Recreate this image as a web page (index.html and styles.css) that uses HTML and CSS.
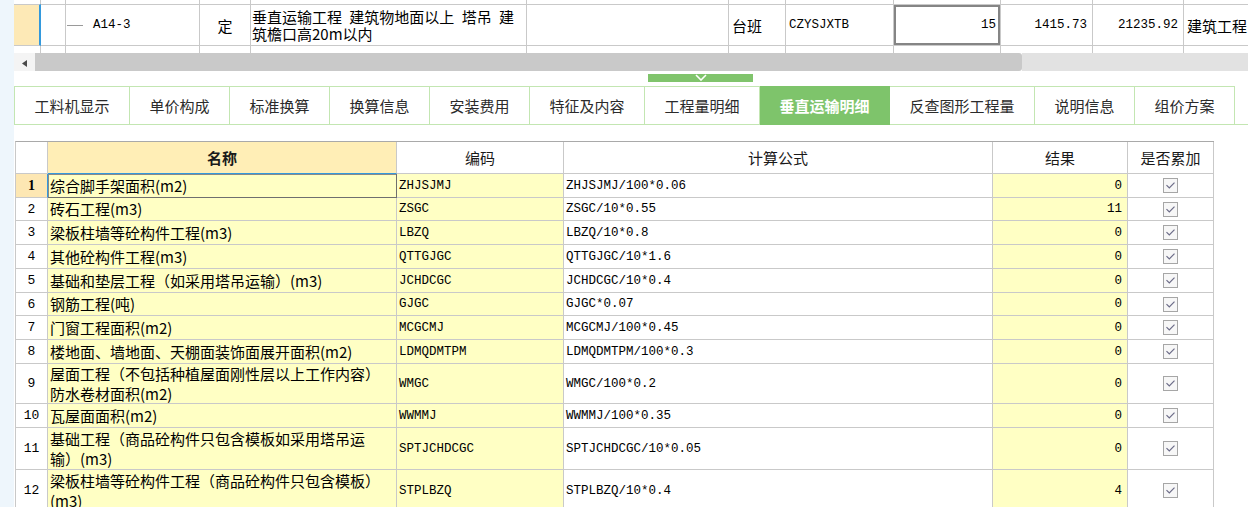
FILE: index.html
```html
<!DOCTYPE html>
<html lang="zh-CN">
<head>
<meta charset="utf-8">
<title>垂直运输明细</title>
<link rel="stylesheet" href="styles.css">
</head>
<body>
<div class="app">
  <div class="side"></div>
  <div class="main">
    <div class="topgrid">
      <div class="trow tr-a">
        <div class="tc"></div><div class="tc"></div><div class="tc"></div><div class="tc"></div><div class="tc"></div><div class="tc"></div><div class="tc"></div><div class="tc"></div><div class="tc"></div><div class="tc"></div><div class="tc"></div><div class="tc"></div>
      </div>
      <div class="trow tr-b">
        <div class="tc sel"></div>
        <div class="tc"></div>
        <div class="tc code"><span class="tree"></span><span class="mono">A14-3</span></div>
        <div class="tc center">定</div>
        <div class="tc desc"><span class="dl">垂直运输工程 建筑物地面以上 塔吊 建</span><span class="dl">筑檐口高20m以内</span></div>
        <div class="tc"></div>
        <div class="tc">台班</div>
        <div class="tc mono">CZYSJXTB</div>
        <div class="tc mono right edit">15</div>
        <div class="tc mono right">1415.73</div>
        <div class="tc mono right">21235.92</div>
        <div class="tc">建筑工程</div>
      </div>
      <div class="trow tr-c">
        <div class="tc"></div><div class="tc"></div><div class="tc"></div><div class="tc"></div><div class="tc"></div><div class="tc"></div><div class="tc"></div><div class="tc"></div><div class="tc"></div><div class="tc"></div><div class="tc"></div><div class="tc"></div>
      </div>
    </div>

    <div class="hscroll">
      <div class="sarrow"><svg width="5" height="7" viewBox="0 0 5 7"><path d="M5 0 L0 3.5 L5 7 Z" fill="#4a4a4a"/></svg></div>
      <div class="sthumb"></div>
      <div class="strack"></div>
    </div>

    <div class="splitter">
      <div class="handle"><svg width="12" height="7" viewBox="0 0 12 7"><path d="M1 1 L6 6 L11 1" fill="none" stroke="#ffffff" stroke-width="1.6"/></svg></div>
    </div>

    <div class="tabbar">
      <div class="tabs">
        <div class="tab w115">工料机显示</div>
        <div class="tab">单价构成</div>
        <div class="tab">标准换算</div>
        <div class="tab">换算信息</div>
        <div class="tab">安装费用</div>
        <div class="tab w115">特征及内容</div>
        <div class="tab w115">工程量明细</div>
        <div class="tab active">垂直运输明细</div>
        <div class="tab w145">反查图形工程量</div>
        <div class="tab">说明信息</div>
        <div class="tab">组价方案</div>
      </div>
    </div>

    <div class="dgrid">
      <div class="c hd"></div>
      <div class="c hd hname">名称</div>
      <div class="c hd">编码</div>
      <div class="c hd">计算公式</div>
      <div class="c hd">结果</div>
      <div class="c hd">是否累加</div>

      <div class="c num num1">1</div>
      <div class="c name focus">综合脚手架面积(m2)</div>
      <div class="c yl mono">ZHJSJMJ</div>
      <div class="c mono">ZHJSJMJ/100*0.06</div>
      <div class="c yl mono res">0</div>
      <div class="c chk"><svg width="15" height="15" viewBox="0 0 15 15"><rect x="0.5" y="0.5" width="14" height="14" fill="#f7f7f7" stroke="#a6a6a6"/><path d="M3.5 7.2 L6.3 10 L11.5 4.6" fill="none" stroke="#6c6c88" stroke-width="1.2"/></svg></div>

      <div class="c num">2</div>
      <div class="c name">砖石工程(m3)</div>
      <div class="c yl mono">ZSGC</div>
      <div class="c mono">ZSGC/10*0.55</div>
      <div class="c yl mono res">11</div>
      <div class="c chk"><svg width="15" height="15" viewBox="0 0 15 15"><rect x="0.5" y="0.5" width="14" height="14" fill="#f7f7f7" stroke="#a6a6a6"/><path d="M3.5 7.2 L6.3 10 L11.5 4.6" fill="none" stroke="#6c6c88" stroke-width="1.2"/></svg></div>

      <div class="c num">3</div>
      <div class="c name">梁板柱墙等砼构件工程(m3)</div>
      <div class="c yl mono">LBZQ</div>
      <div class="c mono">LBZQ/10*0.8</div>
      <div class="c yl mono res">0</div>
      <div class="c chk"><svg width="15" height="15" viewBox="0 0 15 15"><rect x="0.5" y="0.5" width="14" height="14" fill="#f7f7f7" stroke="#a6a6a6"/><path d="M3.5 7.2 L6.3 10 L11.5 4.6" fill="none" stroke="#6c6c88" stroke-width="1.2"/></svg></div>

      <div class="c num">4</div>
      <div class="c name">其他砼构件工程(m3)</div>
      <div class="c yl mono">QTTGJGC</div>
      <div class="c mono">QTTGJGC/10*1.6</div>
      <div class="c yl mono res">0</div>
      <div class="c chk"><svg width="15" height="15" viewBox="0 0 15 15"><rect x="0.5" y="0.5" width="14" height="14" fill="#f7f7f7" stroke="#a6a6a6"/><path d="M3.5 7.2 L6.3 10 L11.5 4.6" fill="none" stroke="#6c6c88" stroke-width="1.2"/></svg></div>

      <div class="c num">5</div>
      <div class="c name">基础和垫层工程（如采用塔吊运输）(m3)</div>
      <div class="c yl mono">JCHDCGC</div>
      <div class="c mono">JCHDCGC/10*0.4</div>
      <div class="c yl mono res">0</div>
      <div class="c chk"><svg width="15" height="15" viewBox="0 0 15 15"><rect x="0.5" y="0.5" width="14" height="14" fill="#f7f7f7" stroke="#a6a6a6"/><path d="M3.5 7.2 L6.3 10 L11.5 4.6" fill="none" stroke="#6c6c88" stroke-width="1.2"/></svg></div>

      <div class="c num">6</div>
      <div class="c name">钢筋工程(吨)</div>
      <div class="c yl mono">GJGC</div>
      <div class="c mono">GJGC*0.07</div>
      <div class="c yl mono res">0</div>
      <div class="c chk"><svg width="15" height="15" viewBox="0 0 15 15"><rect x="0.5" y="0.5" width="14" height="14" fill="#f7f7f7" stroke="#a6a6a6"/><path d="M3.5 7.2 L6.3 10 L11.5 4.6" fill="none" stroke="#6c6c88" stroke-width="1.2"/></svg></div>

      <div class="c num">7</div>
      <div class="c name">门窗工程面积(m2)</div>
      <div class="c yl mono">MCGCMJ</div>
      <div class="c mono">MCGCMJ/100*0.45</div>
      <div class="c yl mono res">0</div>
      <div class="c chk"><svg width="15" height="15" viewBox="0 0 15 15"><rect x="0.5" y="0.5" width="14" height="14" fill="#f7f7f7" stroke="#a6a6a6"/><path d="M3.5 7.2 L6.3 10 L11.5 4.6" fill="none" stroke="#6c6c88" stroke-width="1.2"/></svg></div>

      <div class="c num">8</div>
      <div class="c name">楼地面、墙地面、天棚面装饰面展开面积(m2)</div>
      <div class="c yl mono">LDMQDMTPM</div>
      <div class="c mono">LDMQDMTPM/100*0.3</div>
      <div class="c yl mono res">0</div>
      <div class="c chk"><svg width="15" height="15" viewBox="0 0 15 15"><rect x="0.5" y="0.5" width="14" height="14" fill="#f7f7f7" stroke="#a6a6a6"/><path d="M3.5 7.2 L6.3 10 L11.5 4.6" fill="none" stroke="#6c6c88" stroke-width="1.2"/></svg></div>

      <div class="c num">9</div>
      <div class="c name">屋面工程（不包括种植屋面刚性层以上工作内容）<br>防水卷材面积(m2)</div>
      <div class="c yl mono">WMGC</div>
      <div class="c mono">WMGC/100*0.2</div>
      <div class="c yl mono res">0</div>
      <div class="c chk"><svg width="15" height="15" viewBox="0 0 15 15"><rect x="0.5" y="0.5" width="14" height="14" fill="#f7f7f7" stroke="#a6a6a6"/><path d="M3.5 7.2 L6.3 10 L11.5 4.6" fill="none" stroke="#6c6c88" stroke-width="1.2"/></svg></div>

      <div class="c num">10</div>
      <div class="c name">瓦屋面面积(m2)</div>
      <div class="c yl mono">WWMMJ</div>
      <div class="c mono">WWMMJ/100*0.35</div>
      <div class="c yl mono res">0</div>
      <div class="c chk"><svg width="15" height="15" viewBox="0 0 15 15"><rect x="0.5" y="0.5" width="14" height="14" fill="#f7f7f7" stroke="#a6a6a6"/><path d="M3.5 7.2 L6.3 10 L11.5 4.6" fill="none" stroke="#6c6c88" stroke-width="1.2"/></svg></div>

      <div class="c num">11</div>
      <div class="c name">基础工程（商品砼构件只包含模板如采用塔吊运<br>输）(m3)</div>
      <div class="c yl mono">SPTJCHDCGC</div>
      <div class="c mono">SPTJCHDCGC/10*0.05</div>
      <div class="c yl mono res">0</div>
      <div class="c chk"><svg width="15" height="15" viewBox="0 0 15 15"><rect x="0.5" y="0.5" width="14" height="14" fill="#f7f7f7" stroke="#a6a6a6"/><path d="M3.5 7.2 L6.3 10 L11.5 4.6" fill="none" stroke="#6c6c88" stroke-width="1.2"/></svg></div>

      <div class="c num">12</div>
      <div class="c name">梁板柱墙等砼构件工程（商品砼构件只包含模板）<br>(m3)</div>
      <div class="c yl mono">STPLBZQ</div>
      <div class="c mono">STPLBZQ/10*0.4</div>
      <div class="c yl mono res">4</div>
      <div class="c chk"><svg width="15" height="15" viewBox="0 0 15 15"><rect x="0.5" y="0.5" width="14" height="14" fill="#f7f7f7" stroke="#a6a6a6"/><path d="M3.5 7.2 L6.3 10 L11.5 4.6" fill="none" stroke="#6c6c88" stroke-width="1.2"/></svg></div>
    </div>
  </div>
</div>
</body>
</html>
```
FILE: styles.css
```css
* { box-sizing: border-box; }
html, body {
  margin: 0;
  padding: 0;
  height: 507px;
  overflow: hidden;
  background: #ffffff;
}
body {
  font-family: "Noto Sans CJK SC", "Noto Sans", sans-serif;
  font-size: 15px;
  color: #000;
}
.app {
  display: flex;
  height: 507px;
}
.side {
  width: 14px;
  flex: 0 0 14px;
  background: #eef6fc;
}
.main {
  flex: 1;
  min-width: 0;
  overflow: hidden;
}
.mono {
  font-family: "Liberation Mono", "DejaVu Sans Mono", monospace;
  font-size: 12.5px;
}

/* ---------- top grid ---------- */
.trow {
  display: grid;
  grid-template-columns: 27px 25px 134px 51px 276px 202px 57px 108px 107px 92px 91px 80px;
}
.tc {
  border-right: 1px solid #c9c9c9;
  display: flex;
  align-items: center;
  padding: 0 3px;
  white-space: nowrap;
  overflow: hidden;
}
.tr-a { height: 4px; }
.tr-c { height: 7px; }
.tr-b {
  height: 42px;
}
.tr-b .tc {
  border-top: 1px solid #c9c9c9;
  border-bottom: 1px solid #c9c9c9;
}
.tc.sel {
  background: #fde9b6;
  border-right: 2px solid #3399dd;
}
.tc.code { padding-left: 1px; }
.tree {
  display: inline-block;
  width: 16px;
  height: 1px;
  background: #9a9a9a;
  margin-right: 10px;
}
.tc.center { justify-content: center; }
.tc.right { justify-content: flex-end; padding-right: 5px; }
.tc.desc {
  flex-direction: column;
  align-items: flex-start;
  justify-content: center;
  padding-left: 1px;
  word-spacing: 4px;
}
.dl {
  display: block;
  height: 17px;
  line-height: 17px;
}
.tc.edit {
  box-shadow: inset 0 0 0 2px #858585;
  padding-right: 4px;
}

/* ---------- scrollbar ---------- */
.hscroll {
  display: flex;
  height: 18px;
}
.sarrow {
  width: 21px;
  background: #f4f4f4;
  display: flex;
  align-items: center;
  justify-content: center;
  padding-top: 3px;
  padding-right: 1px;
}
.sthumb {
  width: 987px;
  background: #c9c9c9;
  border-radius: 0 3px 3px 0;
}
.strack {
  flex: 1;
  background: #e2e2e2;
}

/* ---------- splitter ---------- */
.splitter {
  height: 15px;
  padding-top: 3px;
}
.handle {
  margin-left: 634px;
  width: 105px;
  height: 8px;
  background: #80c46c;
  display: flex;
  justify-content: center;
  align-items: flex-start;
}

/* ---------- tabs ---------- */
.tabbar {
  border-bottom: 1px solid #c3e6b2;
  height: 39px;
}
.tabs {
  display: flex;
  width: 1221px;
  height: 38px;
  border-top: 1px solid #c3e6b2;
  border-left: 1px solid #c3e6b2;
}
.tab {
  width: 100px;
  border-right: 1px solid #c3e6b2;
  display: flex;
  align-items: center;
  justify-content: center;
  color: #2b2b2b;
  font-size: 15px;
  white-space: nowrap;
}
.tab.w115 { width: 115px; }
.tab.w145 { width: 145px; }
.tab.active {
  width: 130px;
  background: #7ec46b;
  color: #ffffff;
  font-weight: bold;
  margin-top: -1px;
  margin-bottom: -1px;
  height: 39px;
  border-right-color: #7ec46b;
}

/* ---------- detail grid ---------- */
.dgrid {
  margin-top: 16px;
  margin-left: 1px;
  display: grid;
  grid-template-columns: 32px 349px 167px 429px 135px 86px;
  grid-template-rows: 32px 24px 23px 24px 24px 24px 23px 24px 24px 40px 24px 42px 42px;
  width: 1199px;
  border-top: 1px solid #a9a9a9;
  border-left: 1px solid #c9c9c9;
}
.c {
  border-right: 1px solid #c9c9c9;
  border-bottom: 1px solid #c9c9c9;
  display: flex;
  align-items: center;
  padding: 0 3px;
  white-space: nowrap;
  overflow: hidden;
}
.hd {
  justify-content: center;
  font-size: 15px;
  color: #1a1a1a;
}
.hd.hname {
  background: #ffeeb6;
  font-weight: bold;
  border-bottom-color: #3399dd;
}
.num {
  justify-content: center;
  font-family: "Liberation Mono", "DejaVu Sans Mono", monospace;
  font-size: 13px;
  padding: 0;
}
.num1 {
  background: #fde7b3;
  font-weight: bold;
  font-family: "Liberation Serif", serif;
  font-size: 14px;
  border-right-color: #3399dd;
}
.name {
  background: #ffffc4;
  padding-left: 2px;
  line-height: 20px;
}
.name.focus {
  border-right-color: #6f6f6f;
  border-bottom-color: #6f6f6f;
  box-shadow: inset 1px 1px 0 #8a8a8a;
}
.yl { background: #ffffc4; }
.c.mono { padding-left: 2px; }
.res {
  justify-content: flex-end;
  padding-right: 5px;
}
.chk {
  justify-content: center;
  padding: 0;
}
```
